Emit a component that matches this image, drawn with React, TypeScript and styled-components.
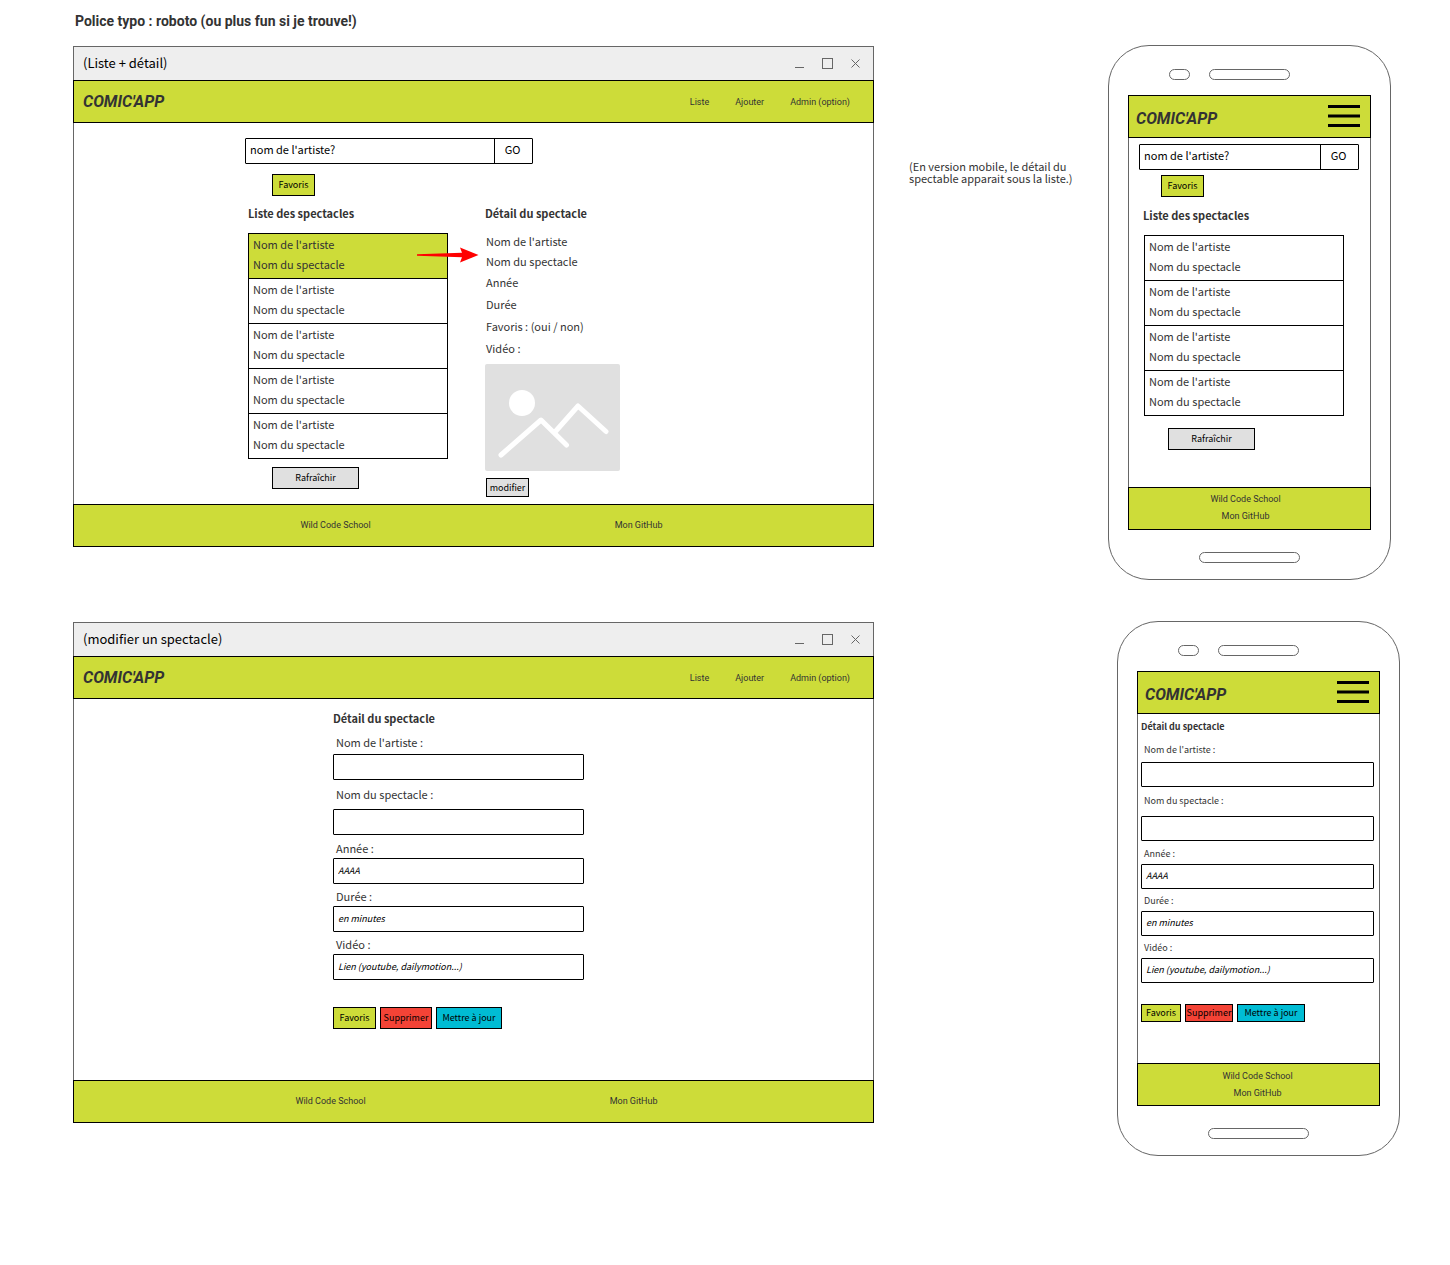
import React, { useId } from "react";
import styled, { createGlobalStyle } from "styled-components";

const lime = "#cddc39";
const grey = "#e0e0e0";
const red = "#f44336";
const cyan = "#00bcd4";
const ink = "#333333";
const frame = "#666666";
const sans = `"Noto Sans CJK SC", "Noto Sans", sans-serif`;
const roboto = `Roboto, "Liberation Sans", sans-serif`;

const GlobalStyle = createGlobalStyle`
  *, *::before, *::after { box-sizing: border-box; }
  body {
    margin: 0;
    background: #ffffff;
    color: ${ink};
    font-family: ${sans};
    font-size: 11px;
    line-height: 20px;
  }
  h1, h2, p, ul, dl, dd { margin: 0; padding: 0; }
  ul { list-style: none; }
  a { color: inherit; text-decoration: none; }
  button, input { font-family: inherit; color: #000000; border-radius: 0; margin: 0; }
  svg { display: block; }
`;

const Page = styled.main`
  padding: 11px 50px 40px 73px;
`;

const PageTitle = styled.h1`
  padding-left: 2px;
  margin-bottom: 14px;
  font: bold 14px/20px ${roboto};
`;

const Board = styled.div`
  display: grid;
  grid-template-columns: minmax(520px, 1fr) 234px 292px;
  row-gap: 41px;
  align-items: start;
`;

const Note = styled.p`
  padding: 115px 34px 0 35px;
  line-height: 12px;
`;

/* Desktop window */

const WindowFrame = styled.section`
  margin-top: 1px;
`;

const TitleBar = styled.div`
  display: flex;
  align-items: center;
  justify-content: space-between;
  height: 34px;
  padding: 0 12px 0 9px;
  border: 1px solid ${frame};
  border-bottom: none;
  background: #eeeeee;
  color: #000000;
  font-size: 13px;
`;

const WindowTitle = styled.span`
  padding-bottom: 2px;
`;

const Header = styled.header<{ $compact?: boolean }>`
  display: flex;
  align-items: center;
  justify-content: space-between;
  height: 43px;
  padding: ${(p) => (p.$compact ? "0 10px 0 7px" : "0 23px 0 9px")};
  border: 1px solid #000000;
  background: ${lime};
`;

const Logo = styled.a<{ $low?: boolean }>`
  padding-top: ${(p) => (p.$low ? 4 : 0)}px;
  font: italic bold 16px/20px ${roboto};
`;

const Nav = styled.nav`
  display: flex;
  gap: 26px;
  font: 9px/16px ${roboto};
`;

const Body = styled.div<{ $pad: string }>`
  padding: ${(p) => p.$pad};
  border: solid ${frame};
  border-width: 0 1px;
`;

const Centered = styled.div<{ $width: number }>`
  max-width: ${(p) => p.$width}px;
  margin: 0 auto;
`;

const Footer = styled.footer<{ $stacked?: boolean; $shift: string }>`
  display: flex;
  flex-direction: ${(p) => (p.$stacked ? "column" : "row")};
  align-items: center;
  justify-content: center;
  gap: ${(p) => (p.$stacked ? "1px" : "244px")};
  height: 43px;
  padding: ${(p) => p.$shift};
  border: 1px solid #000000;
  background: ${lime};
  font: 9px/16px ${roboto};
`;

/* Phone */

const PhoneFrame = styled.section<{ $end?: boolean }>`
  grid-column: 3;
  justify-self: ${(p) => (p.$end ? "end" : "start")};
  width: 283px;
  padding: 23px 19px 16px;
  border: 1px solid ${frame};
  border-radius: 41px;
`;

const Speakers = styled.div`
  display: flex;
  gap: 19px;
  padding: 0 0 15px 41px;
`;

const Pill = styled.span<{ $width: number }>`
  display: block;
  width: ${(p) => p.$width}px;
  height: 11px;
  border: 1px solid ${frame};
  border-radius: 6px;
`;

const HomeBar = styled.div`
  display: flex;
  justify-content: center;
  padding-top: 22px;
`;

const MenuButton = styled.button`
  padding: 0 0 2px;
  border: none;
  background: none;
`;

/* Shared content */

const Heading = styled.h2<{ $small?: boolean }>`
  padding-bottom: ${(p) => (p.$small ? 0 : 2)}px;
  font-size: ${(p) => (p.$small ? 9 : 11)}px;
  line-height: ${(p) => (p.$small ? 20 : 18)}px;
  font-weight: bold;
`;

const Search = styled.form`
  display: flex;
  max-width: 288px;
  height: 26px;
  border: 1px solid #000000;
  border-radius: 1px;
`;

const SearchInput = styled.input`
  flex: 1;
  min-width: 0;
  padding: 0 4px 4px;
  border: none;
  background: none;
  font-size: 11px;
  &::placeholder { color: #000000; opacity: 1; }
`;

const GoButton = styled.button`
  width: 38px;
  padding: 0 2px 4px 0;
  border: none;
  border-left: 1px solid #000000;
  background: none;
  font-size: 11px;
`;

const Button = styled.button<{ $width: number; $height?: number; $fill: string }>`
  display: flex;
  align-items: center;
  justify-content: center;
  width: ${(p) => p.$width}px;
  height: ${(p) => p.$height ?? 22}px;
  padding: 0;
  border: 1px solid #000000;
  background: ${(p) => p.$fill};
  font-size: 9px;
  line-height: 16px;
  white-space: nowrap;
`;

const Indent = styled.div<{ $pad: string }>`
  padding: ${(p) => p.$pad};
`;

const Columns = styled.div`
  display: grid;
  grid-template-columns: 203px 1fr;
  column-gap: 37px;
  padding-top: 8px;
`;

const ShowList = styled.ul`
  width: 200px;
  border: 1px solid #000000;
`;

const ShowItem = styled.li<{ $selected?: boolean }>`
  position: relative;
  height: 45px;
  padding: 0 4px 4px;
  background: ${(p) => (p.$selected ? lime : "transparent")};
  & + & { border-top: 1px solid #000000; }
  &:first-child { height: 44px; }
`;

const ArrowOverlay = styled.svg`
  position: absolute;
  left: 168px;
  top: 13px;
`;

const Details = styled.dl`
  padding-left: 1px;
`;

const DetailLine = styled.dd<{ $height: number }>`
  line-height: ${(p) => p.$height}px;
`;

const Picture = styled.svg`
  margin: 5px 0 7px;
`;

const Field = styled.div<{ $before: number; $gap: number; $small?: boolean }>`
  display: flex;
  flex-direction: column;
  gap: ${(p) => p.$gap}px;
  padding-top: ${(p) => p.$before}px;
  label {
    padding-left: 3px;
    font-size: ${(p) => (p.$small ? 9 : 11)}px;
    line-height: 18px;
  }
  input {
    width: 100%;
    max-width: ${(p) => (p.$small ? "none" : "251px")};
    height: ${(p) => (p.$small ? 25 : 26)}px;
    padding: 0 4px 2px;
    border: 1px solid #000000;
    border-radius: 1px;
    background: none;
    font-size: 9px;
  }
  input::placeholder { color: #000000; opacity: 1; font-style: italic; }
`;

const Actions = styled.div<{ $top: number }>`
  display: flex;
  gap: 4px;
  padding-top: ${(p) => p.$top}px;
`;

function WindowControls() {
  return (
    <svg width="66" height="11" viewBox="0 0 66 11" fill="none" stroke={frame} aria-hidden="true">
      <path d="M0 9.5H9" />
      <rect x="27.5" y="0.5" width="10" height="10" />
      <path d="M56.5 1.5l8 8M64.5 1.5l-8 8" />
    </svg>
  );
}

function BurgerIcon() {
  return (
    <svg width="32" height="23" viewBox="0 0 32 23" aria-hidden="true">
      <path d="M0 2.5H32M0 12H32M0 21.5H32" stroke="#000000" strokeWidth="3" />
    </svg>
  );
}

function PicturePlaceholder() {
  return (
    <Picture width="135" height="107" viewBox="0 0 135 107" fill="none" role="img" aria-label="Vidéo">
      <rect width="135" height="107" rx="2" fill={grey} />
      <circle cx="37" cy="39" r="13" fill="#ffffff" />
      <path
        d="M16 91L56 56L81.500 81M70 68L93 42L121 67.500"
        stroke="#ffffff"
        strokeWidth="5"
        strokeLinecap="round"
        strokeLinejoin="round"
      />
    </Picture>
  );
}

function Arrow() {
  return (
    <ArrowOverlay width="62" height="16" viewBox="0 0 62 16" aria-hidden="true">
      <path d="M0 7.200L45 5.800L43 0.500L61.500 8L43 15.500L45 10.200L0 8.800Z" fill="#ff0000" />
    </ArrowOverlay>
  );
}

function SearchBar() {
  return (
    <Search onSubmit={(e) => e.preventDefault()}>
      <SearchInput type="text" aria-label="nom de l'artiste" placeholder="nom de l'artiste?" />
      <GoButton type="submit">GO</GoButton>
    </Search>
  );
}

function Shows({ count, selected }: { count: number; selected?: number }) {
  return (
    <ShowList>
      {Array.from({ length: count }, (_, i) => (
        <ShowItem key={i} $selected={i === selected}>
          <p>Nom de l'artiste</p>
          <p>Nom du spectacle</p>
          {i === selected && <Arrow />}
        </ShowItem>
      ))}
    </ShowList>
  );
}

const fields = [
  { label: "Nom de l'artiste :", hint: "", before: 4, gap: 3 },
  { label: "Nom du spectacle :", hint: "", before: 5, gap: 6 },
  { label: "Année :", hint: "AAAA", before: 4, gap: 1 },
  { label: "Durée :", hint: "en minutes", before: 3, gap: 1 },
  { label: "Vidéo :", hint: "Lien (youtube, dailymotion...)", before: 3, gap: 1 },
];

function ShowFields({ small }: { small?: boolean }) {
  const id = useId();
  return (
    <>
      {fields.map((f, i) => (
        <Field key={f.label} $before={f.before} $gap={f.gap} $small={small}>
          <label htmlFor={`${id}-${i}`}>{f.label}</label>
          <input id={`${id}-${i}`} type="text" placeholder={f.hint} />
        </Field>
      ))}
    </>
  );
}

function DesktopWindow(props: { title: string; footerShift: string; children: React.ReactNode }) {
  return (
    <WindowFrame>
      <TitleBar>
        <WindowTitle>{props.title}</WindowTitle>
        <WindowControls />
      </TitleBar>
      <Header>
        <Logo href="#">COMIC'APP</Logo>
        <Nav>
          <a href="#">Liste</a>
          <a href="#">Ajouter</a>
          <a href="#">Admin (option)</a>
        </Nav>
      </Header>
      {props.children}
      <Footer $shift={props.footerShift}>
        <a href="#">Wild Code School</a>
        <a href="#">Mon GitHub</a>
      </Footer>
    </WindowFrame>
  );
}

function Phone(props: { end?: boolean; footerShift: string; children: React.ReactNode }) {
  return (
    <PhoneFrame $end={props.end}>
      <Speakers>
        <Pill $width={21} />
        <Pill $width={81} />
      </Speakers>
      <Header $compact>
        <Logo $low href="#">COMIC'APP</Logo>
        <MenuButton type="button" aria-label="Menu">
          <BurgerIcon />
        </MenuButton>
      </Header>
      {props.children}
      <Footer $stacked $shift={props.footerShift}>
        <a href="#">Wild Code School</a>
        <a href="#">Mon GitHub</a>
      </Footer>
      <HomeBar>
        <Pill $width={101} />
      </HomeBar>
    </PhoneFrame>
  );
}

export default function App() {
  return (
    <Page>
      <GlobalStyle />
      <PageTitle>Police typo : roboto (ou plus fun si je trouve!)</PageTitle>
      <Board>
        <DesktopWindow title="(Liste + détail)" footerShift="0 0 2px 16px">
          <Body $pad="15px 0 7px">
            <Centered $width={457}>
              <SearchBar />
              <Indent $pad="10px 27px 0">
                <Button type="button" $width={43} $fill={lime}>Favoris</Button>
              </Indent>
              <Columns>
                <Indent $pad="0 0 0 3px">
                  <Heading>Liste des spectacles</Heading>
                  <Indent $pad="9px 0 8px">
                    <Shows count={5} selected={0} />
                  </Indent>
                  <Indent $pad="0 24px">
                    <Button type="button" $width={87} $fill={grey}>Rafraîchir</Button>
                  </Indent>
                </Indent>
                <div>
                  <Heading>Détail du spectacle</Heading>
                  <Indent $pad="7px 0 0">
                    <Details>
                      <DetailLine $height={20}>Nom de l'artiste</DetailLine>
                      <DetailLine $height={20}>Nom du spectacle</DetailLine>
                      <DetailLine $height={22}>Année</DetailLine>
                      <DetailLine $height={22}>Durée</DetailLine>
                      <DetailLine $height={22}>Favoris : (oui / non)</DetailLine>
                      <DetailLine $height={22}>Vidéo :</DetailLine>
                    </Details>
                  </Indent>
                  <PicturePlaceholder />
                  <Indent $pad="0 1px">
                    <Button type="button" $width={43} $height={19} $fill={grey}>modifier</Button>
                  </Indent>
                </div>
              </Columns>
            </Centered>
          </Body>
        </DesktopWindow>
        <Note>(En version mobile, le détail du spectable apparait sous la liste.)</Note>
        <Phone footerShift="0 8px 2px 0">
          <Body $pad="6px 11px 37px 10px">
            <SearchBar />
            <Indent $pad="5px 22px 9px">
              <Button type="button" $width={43} $fill={lime}>Favoris</Button>
            </Indent>
            <Indent $pad="0 4px">
              <Heading>Liste des spectacles</Heading>
              <Indent $pad="9px 0 12px 1px">
                <Shows count={4} />
              </Indent>
              <Indent $pad="0 25px">
                <Button type="button" $width={87} $fill={grey}>Rafraîchir</Button>
              </Indent>
            </Indent>
          </Body>
        </Phone>

        <DesktopWindow title="(modifier un spectacle)" footerShift="0 0 2px 6px">
          <Body $pad="10px 0 51px">
            <Centered $width={281}>
              <Heading>Détail du spectacle</Heading>
              <ShowFields />
              <Actions $top={27}>
                <Button type="button" $width={43} $fill={lime}>Favoris</Button>
                <Button type="button" $width={52} $fill={red}>Supprimer</Button>
                <Button type="button" $width={66} $fill={cyan}>Mettre à jour</Button>
              </Actions>
            </Centered>
          </Body>
        </DesktopWindow>
        <Phone end footerShift="0 2px 0 0">
          <Body $pad="3px 5px 41px 3px">
            <Heading $small>Détail du spectacle</Heading>
            <ShowFields small />
            <Actions $top={21}>
              <Button type="button" $width={40} $height={18} $fill={lime}>Favoris</Button>
              <Button type="button" $width={48} $height={18} $fill={red}>Supprimer</Button>
              <Button type="button" $width={68} $height={18} $fill={cyan}>Mettre à jour</Button>
            </Actions>
          </Body>
        </Phone>
      </Board>
    </Page>
  );
}
